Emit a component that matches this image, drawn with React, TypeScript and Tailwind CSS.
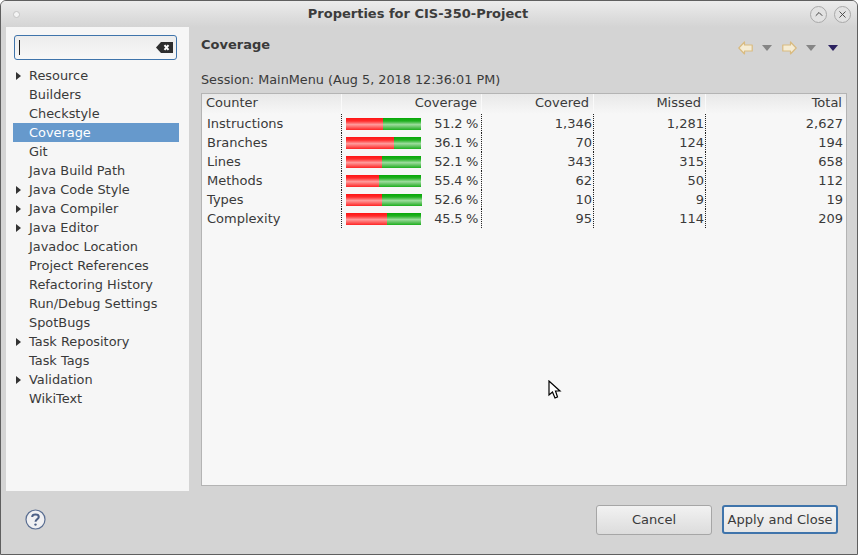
import React from "react";
import { ChevronUp, X } from "lucide-react";

const treeItems = [
  { label: "Resource", arrow: true },
  { label: "Builders" },
  { label: "Checkstyle" },
  { label: "Coverage", selected: true },
  { label: "Git" },
  { label: "Java Build Path" },
  { label: "Java Code Style", arrow: true },
  { label: "Java Compiler", arrow: true },
  { label: "Java Editor", arrow: true },
  { label: "Javadoc Location" },
  { label: "Project References" },
  { label: "Refactoring History" },
  { label: "Run/Debug Settings" },
  { label: "SpotBugs" },
  { label: "Task Repository", arrow: true },
  { label: "Task Tags" },
  { label: "Validation", arrow: true },
  { label: "WikiText" },
];

const rows = [
  { name: "Instructions", red: 37, pct: "51.2 %", covered: "1,346", missed: "1,281", total: "2,627" },
  { name: "Branches", red: 48, pct: "36.1 %", covered: "70", missed: "124", total: "194" },
  { name: "Lines", red: 36, pct: "52.1 %", covered: "343", missed: "315", total: "658" },
  { name: "Methods", red: 33, pct: "55.4 %", covered: "62", missed: "50", total: "112" },
  { name: "Types", red: 36, green: 40, pct: "52.6 %", covered: "10", missed: "9", total: "19" },
  { name: "Complexity", red: 41, pct: "45.5 %", covered: "95", missed: "114", total: "209" },
];

const Arrow = ({ flip }: { flip?: boolean }) => (
  <svg width="15" height="14" viewBox="0 0 15 14" className={flip ? "-scale-x-100" : ""}>
    <path
      d="M0.8 7 L6.5 1 V4 H14.2 V10 H6.5 V13 Z"
      fill="#f5ecd4"
      stroke="#d9bb80"
      strokeWidth="1.2"
      strokeLinejoin="round"
    />
  </svg>
);

const Caret = ({ color = "#858585" }: { color?: string }) => (
  <svg width="10" height="6" viewBox="0 0 10 6">
    <path d="M0 0 H10 L5 6 Z" fill={color} />
  </svg>
);

const App = () => {
  return (
    <div className="relative w-[858px] h-[555px] flex flex-col overflow-hidden rounded-t-[6px] border-x border-b border-t border-[#5f5f5f] bg-[#d4d4d4] text-[13px] text-[#3a3a3a] font-['DejaVu_Sans',sans-serif]">
      {/* title bar */}
      <div className="h-[26px] shrink-0 flex items-center pl-[12px] pr-[6px] bg-gradient-to-b from-[#ececec] to-[#d4d4d4]">
        <div className="w-[7px] h-[7px] rounded-full bg-[#f4f4f4] border border-[#c4c4c4]" />
        <div className="flex-1 text-center font-bold text-[#3c3c3c] pl-[6px]">Properties for CIS-350-Project</div>
        <div className="flex items-center gap-[7px]">
          <div className="w-[17px] h-[17px] rounded-full border border-[#a8a8a8] bg-[#e2e2e2] flex items-center justify-center">
            <ChevronUp size={12} strokeWidth={2} color="#444" />
          </div>
          <div className="w-[17px] h-[17px] rounded-full border border-[#a8a8a8] bg-[#e2e2e2] flex items-center justify-center">
            <X size={11} strokeWidth={2} color="#444" />
          </div>
        </div>
      </div>

      {/* main area */}
      <div className="h-[464px] shrink-0 flex pl-[5px] pr-[10px]">
        <div className="w-[183px] shrink-0 bg-[#f6f6f6] pt-[8px]">
          <div className="ml-[8px] w-[163px] h-[25px] rounded-[3px] border border-[#3f74ab] bg-gradient-to-b from-[#ececec] to-[#f8f8f8] flex items-center justify-between pl-[4px] pr-[3px]">
            <div className="w-px h-[15px] bg-[#222]" />
            <svg width="17" height="11" viewBox="0 0 17 11">
              <path d="M0 5.5 L5 0 H17 V11 H5 Z" fill="#2e2e2e" />
              <path d="M8.5 3.2 L12.5 7.8 M12.5 3.2 L8.5 7.8" stroke="#fff" strokeWidth="2" />
            </svg>
          </div>
          <div className="mt-[6px] ml-[7px] w-[166px]">
            {treeItems.map((item) => (
              <div
                key={item.label}
                className={`h-[19px] flex items-center ${item.selected ? "bg-[#6699cc] text-white" : ""}`}
              >
                <div className="w-[16px] shrink-0 flex justify-end pr-[8px]">
                  {item.arrow && (
                    <svg width="5" height="8" viewBox="0 0 5 8">
                      <path d="M0 0 L5 4 L0 8 Z" fill="#333" />
                    </svg>
                  )}
                </div>
                <span className="text-[12.9px]">{item.label}</span>
              </div>
            ))}
          </div>
        </div>

        <div className="flex-1 flex flex-col pl-[12px] pb-[5px]">
          <div className="h-[44px] shrink-0 flex pt-[8px]">
            <span className="font-bold flex-1">Coverage</span>
            <div className="flex items-center h-[18px] mt-[4px] pr-[9px]">
              <Arrow />
              <span className="ml-[9px]"><Caret /></span>
              <span className="ml-[10px]"><Arrow flip /></span>
              <span className="ml-[9px]"><Caret /></span>
              <span className="ml-[12px]"><Caret color="#2c2260" /></span>
            </div>
          </div>
          <div className="h-[22px] shrink-0 flex items-center pb-[4px] text-[12.8px]">Session: MainMenu (Aug 5, 2018 12:36:01 PM)</div>
          <div className="flex-1 border border-[#b4b4b4] bg-[#f7f7f7]">
            <div className="grid grid-cols-[140px_140px_112px_112px_140px] h-[20px] bg-gradient-to-b from-[#e8e8e8] to-[#f7f7f7]">
              <div className="border-r border-[#fafafa] pl-[4px] leading-[18px]">Counter</div>
              <div className="border-r border-[#fafafa] pr-[4px] text-right leading-[18px]">Coverage</div>
              <div className="border-r border-[#fafafa] pr-[4px] text-right leading-[18px]">Covered</div>
              <div className="border-r border-[#fafafa] pr-[4px] text-right leading-[18px]">Missed</div>
              <div className="pr-[4px] text-right leading-[18px]">Total</div>
            </div>
            {rows.map((r) => (
              <div key={r.name} className="grid grid-cols-[140px_140px_112px_112px_140px] h-[19px] leading-[19px]">
                <div className="pl-[5px]">{r.name}</div>
                <div className="border-x border-dotted border-[#222] -ml-px flex items-center justify-between pl-[4px] pr-[3px]">
                  <div className="flex h-[12px]">
                    <div
                      className="h-full bg-[linear-gradient(180deg,#ff1414_0%,#ff2c2c_25%,#ff9c9c_55%,#ff5a5a_80%,#ff2424_100%)]"
                      style={{ width: r.red }}
                    />
                    <div
                      className="h-full bg-[linear-gradient(180deg,#06a806_0%,#20b020_25%,#9cdc9c_55%,#58c058_80%,#1cb01c_100%)]"
                      style={{ width: r.green ?? 75 - r.red }}
                    />
                  </div>
                  <span className="tracking-[-0.3px]">{r.pct}</span>
                </div>
                <div className="border-r border-dotted border-[#222] pr-[1px] text-right">{r.covered}</div>
                <div className="border-r border-dotted border-[#222] pr-[1px] text-right">{r.missed}</div>
                <div className="text-right pr-[3px]">{r.total}</div>
              </div>
            ))}
          </div>
        </div>
      </div>

      {/* footer */}
      <div className="flex-1 flex items-center pl-[24px] pr-[19px] pb-[6px]">
        <svg width="21" height="21" viewBox="0 0 21 21">
          <circle cx="10.5" cy="10.5" r="9.5" fill="#f0f0f2" stroke="#5a6e92" strokeWidth="1.2" />
          <path d="M7.2 8 C7.2 4.8 13.8 4.8 13.8 8 C13.8 10.2 10.5 10 10.5 12.8" fill="none" stroke="#4c5f85" strokeWidth="2" />
          <circle cx="10.5" cy="15.6" r="1.2" fill="#4c5f85" />
        </svg>
        <div className="flex-1" />
        <button className="w-[116px] h-[30px] rounded-[3px] border border-[#a6a6a6] bg-gradient-to-b from-[#f2f2f2] to-[#dcdcdc] text-[#3a3a3a]">
          Cancel
        </button>
        <button className="ml-[10px] w-[116px] h-[29px] rounded-[3px] border-2 border-[#3f74ab] bg-gradient-to-b from-[#f4f4f4] to-[#e6e6e6] text-[#3a3a3a] whitespace-nowrap">
          Apply and Close
        </button>
      </div>

      {/* mouse pointer */}
      <svg className="absolute left-[547px] top-[379px]" width="14" height="21" viewBox="0 0 14 21">
        <path d="M1 1 V15 L4.5 12 L7 18 L9.5 17 L7.5 11 H12 Z" fill="#fff" stroke="#000" strokeWidth="1.2" strokeLinejoin="miter" />
      </svg>
    </div>
  );
};

export default App;
